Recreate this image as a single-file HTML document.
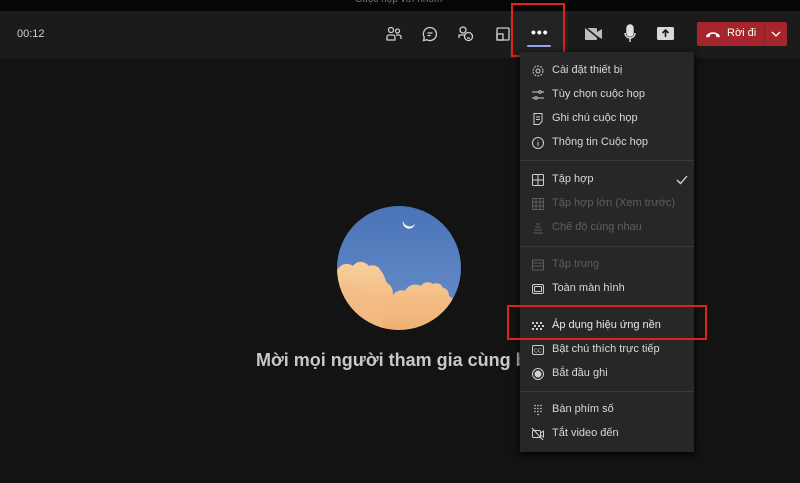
<!DOCTYPE html>
<html><head><meta charset="utf-8"><style>
body{margin:0;width:800px;height:483px;background:#131313;overflow:hidden;position:relative;font-family:"Liberation Sans",sans-serif}
.top{position:absolute;left:0;top:0;width:800px;height:11px;background:#070707}
.bar{position:absolute;left:0;top:11px;width:800px;height:47px;background:#1b1b1b}
.abs{position:absolute}
.menu{position:absolute;left:520px;top:52px;width:174px;height:400px;background:#272727;box-shadow:0 2px 8px #000}
.it{position:absolute;left:32px;font-size:11px;color:#d8d8d8;white-space:nowrap}
.dis{color:#5e5e5e}
.ic{position:absolute;left:12px;width:12px;height:12px}
.sep{position:absolute;left:0;width:174px;height:1px;background:#3a3a3a}
svg{overflow:visible}
</style></head><body>
<div class="top"></div>
<div class="abs" style="left:355px;top:-6px;font-size:10px;color:#777">Cuộc họp với nhóm</div>
<div class="bar"></div>
<div class="abs" style="left:17px;top:28px;font-size:11px;color:#cfcfcf">00:12</div>
<svg class="abs" style="left:386px;top:26px" width="16" height="16" fill="none" stroke="#cfcfcf" stroke-width="1.3"><circle cx="5" cy="4" r="2.5"/><circle cx="11.5" cy="5" r="2"/><path d="M1 14v-3a2 2 0 0 1 2-2h4a2 2 0 0 1 2 2v3z M10 9h3a2 2 0 0 1 2 2v2"/></svg>
<svg class="abs" style="left:422px;top:26px" width="16" height="16" fill="none" stroke="#cfcfcf" stroke-width="1.3"><path d="M8 1.5a6.5 6.5 0 1 1-3.2 12.2L1.5 14.5l.8-3.2A6.5 6.5 0 0 1 8 1.5z M5.5 7h5 M5.5 9.5h3"/></svg>
<svg class="abs" style="left:458px;top:26px" width="16" height="16" fill="none" stroke="#cfcfcf" stroke-width="1.3"><circle cx="5" cy="4" r="3"/><path d="M1 12V9h6"/><circle cx="10.5" cy="10.5" r="4"/><path d="M9 10h.1 M12 10h.1 M9 12h3"/></svg>
<svg class="abs" style="left:496px;top:27px" width="14" height="14" fill="none" stroke="#cfcfcf" stroke-width="1.3"><rect x="1" y="1" width="12" height="12" rx="1"/><rect x="1" y="7" width="6" height="6"/></svg>
<div class="abs" style="left:510px;top:11px;width:58px;height:47px;background:#232323"></div>
<div class="abs" style="left:531px;top:24px;font-size:14px;color:#fff;font-weight:bold;letter-spacing:1px">•••</div>
<div class="abs" style="left:527px;top:45px;width:24px;height:2px;background:#9ca3f5;border-radius:1px"></div>
<div class="abs" style="left:511px;top:3px;width:54px;height:54px;border:2px solid #e3201b;box-sizing:border-box"></div>
<svg class="abs" style="left:585px;top:27px" width="18" height="14" fill="#bdbdbd"><rect x="0" y="1" width="12" height="12" rx="1"/><path d="M12 5l5-3v10l-5-3z"/><path d="M0 0L17 14" stroke="#1b1b1b" stroke-width="1.5"/></svg>
<svg class="abs" style="left:624px;top:25px" width="12" height="18" fill="none" stroke="#e0e0e0" stroke-width="1.4"><rect x="3" y="0" width="6" height="11" rx="3" fill="#e0e0e0"/><path d="M1 8a5 5 0 0 0 10 0 M6 13v4"/></svg>
<svg class="abs" style="left:657px;top:27px" width="17" height="14"><rect x="0" y="0" width="17" height="13" rx="1.5" fill="#d8d8d8"/><path d="M8.5 3v7 M5.5 6l3-3 3 3" stroke="#1b1b1b" stroke-width="1.6" fill="none"/></svg>
<div class="abs" style="left:697px;top:22px;width:90px;height:24px;background:#a4262c;border-radius:2px"></div>
<div class="abs" style="left:764px;top:22px;width:1px;height:24px;background:#8a1f24"></div>
<svg class="abs" style="left:705px;top:30px" width="16" height="8"><path d="M1 6c3-5 11-5 14 0l-1 1.5-3-1v-2c-2-.7-4-.7-6 0v2l-3 1z" fill="#fff"/></svg>
<div class="abs" style="left:727px;top:27px;font-size:11px;color:#fff">Rời đi</div>
<svg class="abs" style="left:771px;top:31px" width="10" height="6"><path d="M1 1l4 4 4-4" stroke="#fff" stroke-width="1.3" fill="none"/></svg>

<svg class="abs" style="left:337px;top:206px" width="124" height="124"><defs><clipPath id="c"><circle cx="62" cy="62" r="62"/></clipPath><linearGradient id="s" x1="0" y1="0" x2="0" y2="1"><stop offset="0" stop-color="#4a74b8"/><stop offset="1" stop-color="#6a8fca"/></linearGradient><linearGradient id="cl" x1="0" y1="0" x2="0" y2="1"><stop offset="0" stop-color="#f7cf9c"/><stop offset="1" stop-color="#eea868"/></linearGradient></defs><g clip-path="url(#c)"><rect width="124" height="124" fill="url(#s)"/><path d="M0 64c4-6 10-8 16-4 4-6 12-5 16 0 4-2 10 0 12 5 3 3 4 8 6 12 4 2 6 6 6 12 3-4 8-6 12-4 3-6 10-8 16-5 2-4 8-5 12-2 4-2 9 0 10 4 4 0 6 4 6 8 4 2 6 6 6 10v40H0z" fill="url(#cl)"/><path d="M0 78c8-4 14 0 18 4 6-2 12 2 14 8 6-2 12 2 14 8v26H0z" fill="#f3bd85" opacity=".6"/></g><path d="M66 15a6 6 0 0 0 12 3a7 7 0 0 1-12-3z" fill="#f4f4f4"/></svg>
<div class="abs" style="left:256px;top:350px;width:264px;overflow:hidden;white-space:nowrap;font-size:18px;font-weight:bold;color:#c8c8c8">Mời mọi người tham gia cùng bạn</div>

<div class="menu">
<svg class="ic" style="top:13px" viewBox="0 0 12 12" fill="none" stroke="#cfcfcf" stroke-width="1"><circle cx="6" cy="6" r="2"/><circle cx="6" cy="6" r="5" stroke-dasharray="2 1.2"/></svg><div class="it" style="top:12px">Cài đặt thiết bị</div>
<svg class="ic" style="top:37px" viewBox="0 0 12 12" fill="none" stroke="#cfcfcf" stroke-width="1"><path d="M0 3h12M0 9h12"/><circle cx="8" cy="3" r="1.3" fill="#272727"/><circle cx="4" cy="9" r="1.3" fill="#272727"/></svg><div class="it" style="top:36px">Tùy chọn cuộc họp</div>
<svg class="ic" style="top:61px" viewBox="0 0 12 12" fill="none" stroke="#cfcfcf" stroke-width="1"><path d="M2 .5h8v8l-3 3H2z M4 4h4M4 6.5h4"/></svg><div class="it" style="top:60px">Ghi chú cuộc họp</div>
<svg class="ic" style="top:85px" viewBox="0 0 12 12" fill="none" stroke="#cfcfcf" stroke-width="1"><circle cx="6" cy="6" r="5.5"/><path d="M6 5v4M6 3v.6"/></svg><div class="it" style="top:84px">Thông tin Cuộc họp</div>
<div class="sep" style="top:108px"></div>
<svg class="ic" style="top:122px" viewBox="0 0 12 12" fill="none" stroke="#cfcfcf" stroke-width="1"><rect x=".5" y=".5" width="11" height="11" rx="1"/><path d="M6 .5v11M.5 6h11"/></svg><div class="it" style="top:121px">Tập hợp</div>
<svg class="abs" style="left:156px;top:123px" width="12" height="10"><path d="M1 5l3.5 3.5L11 1" stroke="#d8d8d8" stroke-width="1.3" fill="none"/></svg>
<svg class="ic" style="top:146px" viewBox="0 0 12 12" fill="none" stroke="#5e5e5e" stroke-width="1"><rect x=".5" y=".5" width="11" height="11"/><path d="M4 .5v11M8 .5v11M.5 4h11M.5 8h11"/></svg><div class="it dis" style="top:145px">Tập hợp lớn (Xem trước)</div>
<svg class="ic" style="top:170px" viewBox="0 0 12 12" fill="none" stroke="#5e5e5e" stroke-width="1"><path d="M1 11h10M2 8h8M3 5h6M4 2h4"/></svg><div class="it dis" style="top:169px">Chế độ cùng nhau</div>
<div class="sep" style="top:194px"></div>
<svg class="ic" style="top:207px" viewBox="0 0 12 12" fill="none" stroke="#5e5e5e" stroke-width="1"><rect x=".5" y="1" width="11" height="10"/><path d="M.5 4h11M.5 7h11"/></svg><div class="it dis" style="top:206px">Tập trung</div>
<svg class="ic" style="top:231px" viewBox="0 0 12 12" fill="none" stroke="#cfcfcf" stroke-width="1"><rect x=".5" y="1.5" width="11" height="9" rx="1.5"/><rect x="2.5" y="3.5" width="7" height="5" rx=".5"/></svg><div class="it" style="top:230px">Toàn màn hình</div>
<div class="sep" style="top:254px"></div>
<svg class="ic" style="top:268px" viewBox="0 0 12 12" fill="#cfcfcf"><path d="M0 2h2v2H0zM4 2h2v2H4zM8 2h2v2H8zM2 5h2v2H2zM6 5h2v2H6zM10 5h2v2h-2zM0 8h2v2H0zM4 8h2v2H4zM8 8h2v2H8z"/></svg><div class="it" style="top:267px;color:#e8e8e8">Áp dụng hiệu ứng nền</div>
<svg class="ic" style="top:292px" viewBox="0 0 12 12" fill="none" stroke="#cfcfcf" stroke-width="1"><rect x=".5" y="1.5" width="11" height="9" rx="1.5"/><text x="2" y="8.5" font-size="5.5" fill="#cfcfcf" stroke="none" font-family="Liberation Sans">CC</text></svg><div class="it" style="top:291px">Bật chú thích trực tiếp</div>
<svg class="ic" style="top:316px" viewBox="0 0 12 12"><circle cx="6" cy="6" r="5.5" fill="none" stroke="#cfcfcf"/><circle cx="6" cy="6" r="3.5" fill="#cfcfcf"/></svg><div class="it" style="top:315px">Bắt đầu ghi</div>
<div class="sep" style="top:339px"></div>
<svg class="ic" style="top:352px" viewBox="0 0 12 12" fill="#cfcfcf"><circle cx="3" cy="1.5" r=".8"/><circle cx="6" cy="1.5" r=".8"/><circle cx="9" cy="1.5" r=".8"/><circle cx="3" cy="4.5" r=".8"/><circle cx="6" cy="4.5" r=".8"/><circle cx="9" cy="4.5" r=".8"/><circle cx="3" cy="7.5" r=".8"/><circle cx="6" cy="7.5" r=".8"/><circle cx="9" cy="7.5" r=".8"/><circle cx="6" cy="10.5" r=".8"/></svg><div class="it" style="top:351px">Bàn phím số</div>
<svg class="ic" style="top:376px" viewBox="0 0 12 12" fill="none" stroke="#cfcfcf" stroke-width="1"><rect x=".5" y="2.5" width="8" height="7" rx="1"/><path d="M8.5 5l3-2v6l-3-2M0 0l11 12"/></svg><div class="it" style="top:375px">Tắt video đến</div>
</div>
<div class="abs" style="left:507px;top:305px;width:200px;height:35px;border:2px solid #e3201b;box-sizing:border-box"></div>
</body></html>
